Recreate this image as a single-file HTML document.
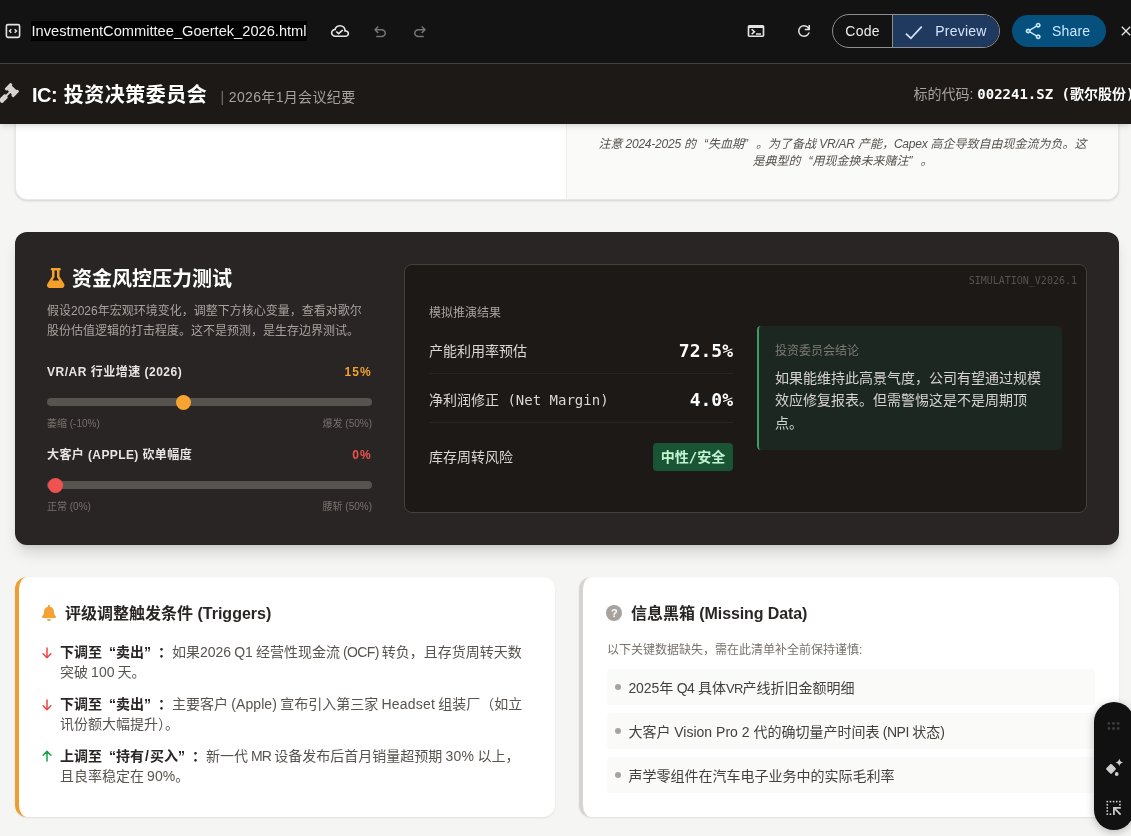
<!DOCTYPE html>
<html lang="zh-CN">
<head>
<meta charset="utf-8">
<title>InvestmentCommittee_Goertek_2026.html</title>
<style>
*{box-sizing:border-box;margin:0;padding:0}
html,body{width:1131px;height:836px;overflow:hidden}
body{background:#f5f5f4;font-family:"Liberation Sans","Noto Sans CJK SC",sans-serif;color:#292524;position:relative}
body>*{will-change:transform}
.mono{font-family:"DejaVu Sans Mono","Liberation Mono","Noto Sans CJK SC",monospace}
/* top app bar */
#topbar{position:absolute;left:0;top:0;width:1131px;height:64px;background:#131313;border-bottom:1px solid #424242;z-index:30}
#fname{position:absolute;left:31px;top:21px;height:19.500px;line-height:19.500px;font-size:14.650px;color:#f2f2f2;background:#000;padding:0 .5px;white-space:nowrap}
/* header */
#hdr{position:absolute;left:0;top:64px;width:1131px;height:60px;background:#1c1917;z-index:20;box-shadow:0 4px 6px -1px rgba(0,0,0,.1),0 2px 4px -1px rgba(0,0,0,.06)}
#hdr h1{position:absolute;left:32px;word-spacing:.5px;top:16px;font-size:20px;line-height:30px;font-weight:700;color:#fff;white-space:nowrap;letter-spacing:.5px}
#hdr .sub{position:absolute;left:220.500px;top:21px;font-size:14px;line-height:24px;color:#a8a29e;white-space:nowrap;letter-spacing:.35px}
#hdr .sub i{font-style:normal;color:#78716c}
#hdr .code{position:absolute;left:913.500px;top:18px;font-size:14px;line-height:24px;color:#a8a29e;white-space:nowrap}
#hdr .code b{color:#fff;font-weight:700;font-size:14px}
/* top card */
#card1{position:absolute;left:15px;top:100px;width:1104px;height:99.500px;background:#fff;border:1px solid #e9e7e5;border-radius:12px;box-shadow:0 1px 3px rgba(0,0,0,.1),0 1px 2px rgba(0,0,0,.06);overflow:hidden}
#card1 .r{position:absolute;left:550px;top:0;width:552px;height:99px;background:#fafaf9;border-left:1px solid #f0efed}
#card1 .note{position:absolute;left:9.500px;top:35.300px;width:532px;white-space:nowrap;text-align:center;font-size:12px;line-height:16.300px;color:#57534e;font-style:italic}
/* dark card */
#sim{position:absolute;left:15px;top:232px;width:1104px;height:313px;background:#292524;border-radius:12px;box-shadow:0 10px 15px -3px rgba(0,0,0,.15),0 4px 6px -2px rgba(0,0,0,.08);color:#fff}

#sim h2{position:absolute;left:57px;top:32px;font-size:20px;line-height:30px;font-weight:700;color:#fff;white-space:nowrap}
#sim .desc{position:absolute;left:32px;top:70.200px;width:320px;font-size:12px;line-height:19.5px;color:#a8a29e}
.lab{position:absolute;left:32px;font-size:12px;line-height:16px;font-weight:700;color:#e7e5e4;white-space:nowrap;letter-spacing:.5px}
.val{position:absolute;right:747px;font-size:12px;line-height:16px;font-weight:700;white-space:nowrap;text-align:right;letter-spacing:1.100px;margin-right:.200px}
.track{position:absolute;left:32px;width:325px;height:8px;border-radius:4px;background:#57534e}
.thumb{position:absolute;width:15px;height:15px;border-radius:50%}
.tick{position:absolute;font-size:10px;line-height:14px;color:#78716c;white-space:nowrap}
#panel{position:absolute;left:389px;top:32px;width:683px;height:249px;background:#1c1917;border:1px solid #44403c;border-radius:8px}
#panel .ver{position:absolute;right:9px;top:9px;font-size:10px;line-height:14px;color:#57534e;white-space:nowrap}
#panel .ttl{position:absolute;left:24px;top:40px;font-size:12px;line-height:16px;color:#a8a29e;white-space:nowrap}
.row{position:absolute;left:24px;width:304px;border-bottom:1px solid #292524}
.row .k{position:absolute;left:0;font-size:14px;line-height:20px;color:#d9d6d4;white-space:nowrap}
.row .v{position:absolute;right:0;font-size:18px;line-height:28px;font-weight:700;color:#fff;white-space:nowrap}
.badge{position:absolute;right:0;top:7px;width:80px;height:28px;border-radius:4px;background:#195535;color:#c3f5d2;font-size:14px;line-height:28px;font-weight:700;text-align:center;white-space:nowrap}
#concl{position:absolute;left:352px;top:61px;width:305px;height:124px;background:#1c2721;border-left:2px solid #3f9c5c;border-radius:4px}
#concl .t{position:absolute;left:16px;top:17px;font-size:12px;line-height:16px;color:#807974;white-space:nowrap}
#concl .b{position:absolute;left:16px;top:40.500px;width:272px;font-size:14px;line-height:22.75px;color:#d6d3d1}
/* bottom cards */
.bcard{position:absolute;top:577px;height:240px;background:#fff;border-radius:12px;box-shadow:0 1px 2px rgba(0,0,0,.09)}
.bcard h3{position:absolute;top:25px;font-size:16px;line-height:24px;font-weight:700;color:#292524;white-space:nowrap}
#trig{left:15px;width:540px;border-left:4px solid #ed9d34}
#miss{left:579px;width:540px;border-left:4px solid #d6d3d1}
.ti{position:absolute;left:41px;width:480px;font-size:14px;line-height:20px;color:#57534e;white-space:nowrap}
.ti .l{word-spacing:-.8px}
.ti b .l{padding:0 1px}
.ti b{color:#292524;font-weight:700}
#miss .sub{position:absolute;left:24px;top:64.800px;font-size:12px;line-height:16px;color:#78716c;white-space:nowrap}
.mi{position:absolute;left:24px;width:488px;height:36px;border-radius:4px;background:#fafaf9;font-size:14px;line-height:38px;color:#44403c;padding-left:21.400px;white-space:nowrap}
.mi:before{content:"";position:absolute;left:8px;top:15px;width:6px;height:6px;border-radius:50%;background:#a8a29e}
#float{position:absolute;left:1094.300px;top:702px;width:40px;height:127.500px;border-radius:20px;background:#111;z-index:40;box-shadow:0 2px 8px rgba(0,0,0,.25)}
.q{display:inline-block;width:1em}
.ql{text-align:right}
.qr{text-align:left}

svg{position:absolute;display:block;overflow:visible}
#pill{position:absolute;left:832px;top:14px;width:168px;height:34px;border:1px solid #8e8e8e;border-radius:17px;overflow:hidden}
#pill .c{position:absolute;left:0;top:0;width:59px;height:32px;line-height:32px;text-align:center;font-size:14px;color:#ececec;letter-spacing:.2px}
#pill .p{position:absolute;left:59px;top:0;width:107px;height:32px;background:#20395f;border-left:1px solid #8e8e8e}
#pill .p span{position:absolute;left:42.300px;top:0;line-height:32px;font-size:14px;color:#d3e3fd;letter-spacing:.2px}
#share{position:absolute;left:1012px;top:15px;width:94px;height:32px;border-radius:16px;background:#05507d}
#share span{position:absolute;left:40px;top:0;line-height:32px;font-size:14px;color:#c9e6ff;letter-spacing:.2px}
#card1 .l{letter-spacing:-.22px}
.qm{position:absolute;left:23.450px;top:27.950px;width:16px;height:16px;border-radius:50%;background:#a8a29e;color:#fff;font-size:11px;line-height:16px;font-weight:700;text-align:center}
#fname span{position:relative;top:.9px}
</style>
</head>
<body>
<div id="topbar">
  <svg style="left:5px;top:23px" width="16" height="16" viewBox="0 0 16 16" fill="none" stroke="#e3e3e3" stroke-width="1.6"><rect x="1.4" y="1.6" width="13.2" height="12.8" rx="1.6"/><path d="M6.3 6.3 4.6 8l1.7 1.7M9.7 6.3 11.4 8 9.700 9.700" stroke-width="1.5"/></svg>
  <svg style="left:330px;top:22px" width="20" height="18" preserveAspectRatio="none" viewBox="0 -960 960 960" fill="#e3e3e3"><path d="M414-280l226-226-58-58-169 169-84-84-57 57 142 142ZM260-160q-91 0-155.500-63T40-377q0-78 47-139t123-78q25-92 100-149t170-57q117 0 198.500 81.500T760-520q69 8 114.500 59.500T920-340q0 75-52.500 127.500T740-160H260Zm0-80h480q42 0 71-29t29-71q0-42-29-71t-71-29h-60v-80q0-83-58.500-141.500T480-720q-83 0-141.500 58.500T280-520h-20q-58 0-99 41t-41 99q0 58 41 99t99 41Z"/></svg>
  <svg style="left:371.200px;top:23px" width="18" height="18" viewBox="0 -960 960 960" fill="#757575"><path d="M280-200v-80h284q63 0 109.500-40T720-420q0-60-46.500-100T564-560H312l104 104-56 56-200-200 200-200 56 56-104 104h252q97 0 166.500 63T800-420q0 94-69.500 157T564-200H280Z"/></svg>
  <svg style="left:411px;top:23px" width="18" height="18" viewBox="0 -960 960 960" fill="#757575"><path d="M396-200q-97 0-166.500-63T160-420q0-94 69.500-157T396-640h252L544-744l56-56 200 200-200 200-56-56 104-104H396q-63 0-109.500 40T240-420q0 60 46.500 100T396-280h284v80H396Z"/></svg>
  <svg style="left:746px;top:21.700px" width="20" height="18" preserveAspectRatio="none" viewBox="0 -960 960 960" fill="#e3e3e3"><path d="M160-160q-33 0-56.500-23.500T80-240v-480q0-33 23.500-56.500T160-800h640q33 0 56.500 23.500T880-720v480q0 33-23.500 56.500T800-160H160Zm0-80h640v-400H160v400Zm140-40-56-56 103-104-104-104 57-56 160 160-160 160Zm180 0v-80h240v80H480Z"/></svg>
  <svg style="left:795.250px;top:22px" width="18" height="18" viewBox="0 -960 960 960" fill="#e3e3e3"><path d="M480-160q-134 0-227-93t-93-227q0-134 93-227t227-93q69 0 132 28.500T720-690v-110h80v280H520v-80h168q-32-56-87.500-88T480-720q-100 0-170 70t-70 170q0 100 70 170t170 70q77 0 139-44t87-116h84q-28 106-114 173t-196 67Z"/></svg>
  <div id="pill"><div class="c">Code</div><div class="p"><svg style="left:0;top:0" width="40" height="32" viewBox="0 0 40 32" fill="none" stroke="#d3e3fd" stroke-width="1.700"><path d="M12.900 18.600 17.900 23.400 28.700 11.700"/></svg><span>Preview</span></div></div>
  <div id="share"><svg style="left:12px;top:6px" width="20" height="20" viewBox="0 -960 960 960" fill="#c9e6ff"><path d="M680-80q-50 0-85-35t-35-85q0-6 3-28L282-392q-16 15-37 23.500t-45 8.500q-50 0-85-35t-35-85q0-50 35-85t85-35q24 0 45 8.500t37 23.500l281-164q-2-7-2.500-13.500T560-760q0-50 35-85t85-35q50 0 85 35t35 85q0 50-35 85t-85 35q-24 0-45-8.500T598-672L317-508q2 7 2.500 13.500t.5 14.500q0 8-.5 14.500T317-452l281 164q16-15 37-23.500t45-8.500q50 0 85 35t35 85q0 50-35 85t-85 35Zm0-80q17 0 28.500-11.500T720-200q0-17-11.500-28.500T680-240q-17 0-28.500 11.500T640-200q0 17 11.500 28.500T680-160ZM200-440q17 0 28.500-11.500T240-480q0-17-11.500-28.500T200-520q-17 0-28.500 11.500T160-480q0 17 11.500 28.500T200-440Zm480-280q17 0 28.500-11.500T720-760q0-17-11.500-28.500T680-800q-17 0-28.500 11.500T640-760q0 17 11.500 28.500T680-720Z"/></svg><span>Share</span></div>
  <svg style="left:1118px;top:23px" width="16" height="16" viewBox="0 0 24 24" fill="#e3e3e3"><path d="M19 6.410 17.590 5 12 10.590 6.410 5 5 6.410 10.590 12 5 17.590 6.410 19 12 13.410 17.590 19 19 17.590 13.410 12z"/></svg>
  <div id="fname"><span>InvestmentCommittee_Goertek_2026.html</span></div>
</div>
<div id="hdr">
  <svg style="left:-1px;top:19px" width="20" height="20" viewBox="0 0 512 512" fill="#d6d3d1"><path d="M504.971 199.362l-22.627-22.627c-9.373-9.373-24.569-9.373-33.941 0l-5.657 5.657L329.608 69.255l5.657-5.657c9.373-9.373 9.373-24.569 0-33.941L312.638 7.029c-9.373-9.373-24.569-9.373-33.941 0L154.246 131.480c-9.373 9.373-9.373 24.569 0 33.941l22.627 22.627c9.373 9.373 24.569 9.373 33.941 0l5.657-5.657 39.598 39.598-81.040 81.040-5.657-5.657c-12.497-12.497-32.758-12.497-45.255 0L9.373 412.118c-12.497 12.497-12.497 32.758 0 45.255l45.255 45.255c12.497 12.497 32.758 12.497 45.255 0l114.745-114.745c12.497-12.497 12.497-32.758 0-45.255l-5.657-5.657 81.040-81.040 39.598 39.598-5.657 5.657c-9.373 9.373-9.373 24.569 0 33.941l22.627 22.627c9.373 9.373 24.569 9.373 33.941 0l124.451-124.451c9.372-9.372 9.372-24.568 0-33.941z"/></svg>
  <h1><span style="letter-spacing:-.5px">IC:</span> 投资决策委员会</h1>
  <div class="sub"><i>|</i> 2026年1月会议纪要</div>
  <div class="code">标的代码: <b class="mono">002241.SZ (歌尔股份)</b></div>
</div>
<div id="card1">
  <div class="r"><div class="note">注意<span class="l"> 2024-2025 </span>的<span class="q ql">“</span>失血期<span class="q qr">”</span>。为了备战<span class="l"> VR/AR </span>产能，<span class="l">Capex </span>高企导致自由现金流为负。这<br>是典型的<span class="q ql">“</span>用现金换未来赌注<span class="q qr">”</span>。</div></div>
</div>
<div id="sim">
  <svg style="left:31.700px;top:35.600px" width="17.500" height="20" viewBox="0 0 448 512" fill="#f5a02c"><path d="M437.200 403.500L320 215V64h8c13.300 0 24-10.700 24-24V24c0-13.300-10.700-24-24-24H120c-13.300 0-24 10.700-24 24v16c0 13.300 10.700 24 24 24h8v151L10.800 403.500C-18.500 450.600 15.300 512 70.900 512h306.200c55.700 0 89.400-61.500 60.100-108.500zM137.900 320l48.200-77.600c3.700-5.200 5.800-11.600 5.800-18.400V64h64v160c0 6.900 2.200 13.200 5.800 18.400l48.200 77.600h-172z"/></svg>
  <h2>资金风控压力测试</h2>
  <div class="desc">假设2026年宏观环境变化，调整下方核心变量，查看对歌尔股份估值逻辑的打击程度。这不是预测，是生存边界测试。</div>
  <div class="lab" style="top:132px">VR/AR 行业增速 (2026)</div>
  <div class="val" style="top:132px;color:#f0a030">15%</div>
  <div class="track" style="top:165.800px"></div>
  <div class="thumb" style="left:160.500px;top:162.500px;background:#f7a530"></div>
  <div class="tick" style="left:32px;top:185px">萎缩 (-10%)</div>
  <div class="tick" style="right:747px;top:185px">爆发 (50%)</div>
  <div class="lab" style="top:215px;letter-spacing:.4px">大客户 (APPLE) 砍单幅度</div>
  <div class="val" style="top:215px;color:#f05252">0%</div>
  <div class="track" style="top:248.800px"></div>
  <div class="thumb" style="left:32.500px;top:245.500px;background:#f05252"></div>
  <div class="tick" style="left:32px;top:268px">正常 (0%)</div>
  <div class="tick" style="right:747px;top:268px">腰斩 (50%)</div>
  <div id="panel">
    <div class="ver mono">SIMULATION_V2026.1</div>
    <div class="ttl">模拟推演结果</div>
    <div class="row" style="top:61px;height:48px"><div class="k" style="top:15px">产能利用率预估</div><div class="v mono" style="top:11px">72.5%</div></div>
    <div class="row" style="top:109px;height:49px"><div class="k mono" style="top:16px">净利润修正 (Net Margin)</div><div class="v mono" style="top:12px">4.0%</div></div>
    <div class="row" style="top:171px;height:42px;border:0"><div class="k" style="top:11px">库存周转风险</div><div class="badge mono">中性/安全</div></div>
    <div id="concl"><div class="t">投资委员会结论</div><div class="b">如果能维持此高景气度，公司有望通过规模效应修复报表。但需警惕这是不是周期顶点。</div></div>
  </div>
</div>
<div class="bcard" id="trig">
  <svg style="left:23.400px;top:27.800px" width="14" height="16" viewBox="0 0 448 512" fill="#f5a133"><path d="M224 512c35.320 0 63.970-28.650 63.970-64H160.030c0 35.350 28.650 64 63.970 64zm215.390-149.710c-19.320-20.760-55.470-51.990-55.470-154.290 0-77.700-54.480-139.900-127.940-155.160V32c0-17.670-14.320-32-31.980-32s-31.980 14.330-31.980 32v20.840C118.560 68.100 64.080 130.300 64.080 208c0 102.300-36.150 133.530-55.470 154.290-6 6.450-8.660 14.160-8.610 21.710.110 16.400 12.980 32 32.100 32h383.800c19.120 0 32-15.600 32.100-32 .050-7.550-2.610-15.270-8.610-21.710z"/></svg>
  <svg style="left:22.050px;top:69.6px" width="12" height="12" viewBox="0 0 12 12" fill="none" stroke="#ef4444" stroke-width="1.500" stroke-linecap="round" stroke-linejoin="round"><path d="M6 1.100v9.600M2.100 6.800 6 10.700l3.900-3.900"/></svg>
  <svg style="left:22.050px;top:121.5px" width="12" height="12" viewBox="0 0 12 12" fill="none" stroke="#ef4444" stroke-width="1.500" stroke-linecap="round" stroke-linejoin="round"><path d="M6 1.100v9.600M2.100 6.800 6 10.700l3.900-3.900"/></svg>
  <svg style="left:22.050px;top:173.3px" width="12" height="12" viewBox="0 0 12 12" fill="none" stroke="#16a34a" stroke-width="1.500" stroke-linecap="round" stroke-linejoin="round"><path d="M6 10.900V1.300M2.100 5.200 6 1.300l3.900 3.900"/></svg>
  <h3 style="left:46px">评级调整触发条件<span class="l"> (Triggers)</span></h3>
  <div class="ti" style="top:65px"><b>下调至<span class="q ql">“</span>卖出<span class="q qr">”</span>：</b>如果<span class="l">2026 Q1 </span>经营性现金流<span class="l"> <span style="letter-spacing:-.65px">(OCF)</span> </span>转负，且存货周转天数<br>突破<span class="l"> 100 </span>天。</div>
  <div class="ti" style="top:117px"><b>下调至<span class="q ql">“</span>卖出<span class="q qr">”</span>：</b>主要客户<span class="l" style="letter-spacing:.1px"> (Apple) </span>宣布引入第三家<span class="l" style="letter-spacing:.2px"> Headset </span>组装厂（如立<br>讯份额大幅提升）。</div>
  <div class="ti" style="top:169px"><b>上调至<span class="q ql">“</span>持有<span class="l">/</span>买入<span class="q qr">”</span>：</b>新一代<span class="l"> <span style="letter-spacing:-.8px">MR</span> </span>设备发布后首月销量超预期<span class="l" style="letter-spacing:.2px"> 30% </span>以上，<br>且良率稳定在<span class="l"> 90%</span>。</div>
</div>
<div class="bcard" id="miss">
  <div class="qm">?</div>
  <h3 style="left:48px">信息黑箱<span style="letter-spacing:-.1px"> (Missing Data)</span></h3>
  <div class="sub">以下关键数据缺失，需在此清单补全前保持谨慎:</div>
  <div class="mi" style="top:92px"><span style="letter-spacing:-.1px">2025</span>年<span style="letter-spacing:-.4px"> Q4 </span>具体<span style="font-size:13px;letter-spacing:-.75px">VR</span>产线折旧金额明细</div>
  <div class="mi" style="top:136px">大客户 Vision Pro 2 代的确切量产时间表<span style="letter-spacing:-.5px"> (NPI </span>状态)</div>
  <div class="mi" style="top:180px">声学零组件在汽车电子业务中的实际毛利率</div>
</div>
<div id="float"><svg style="left:0;top:0" width="40" height="128" viewBox="0 0 40 128"><g fill="#3d3d3d"><circle cx="14.9" cy="21.4" r="1.400"/><circle cx="19.5" cy="21.4" r="1.400"/><circle cx="24.2" cy="21.4" r="1.400"/><circle cx="14.9" cy="26.5" r="1.400"/><circle cx="19.5" cy="26.5" r="1.400"/><circle cx="24.2" cy="26.5" r="1.400"/></g><g fill="#cfcfcf"><path d="M17 62q.450 0 .800.350l3.700 3.700q.850.850 0 1.700l-3.700 3.700q-.800.800-1.600 0l-3.700-3.700q-.850-.850 0-1.700l3.700-3.700q.350-.350.800-.350z"/><path d="M25.300 56.500c.500 2.400 1.500 3.400 3.900 3.900-2.400.500-3.400 1.500-3.900 3.900-.500-2.400-1.500-3.400-3.900-3.900 2.400-.500 3.400-1.500 3.900-3.900z"/><circle cx="22.700" cy="72" r="1.900"/><rect x="12.50" y="98.80" width="1.600" height="1.600"/><rect x="15.65" y="98.80" width="1.600" height="1.600"/><rect x="18.80" y="98.80" width="1.600" height="1.600"/><rect x="21.95" y="98.80" width="1.600" height="1.600"/><rect x="25.10" y="98.80" width="1.600" height="1.600"/><rect x="12.50" y="101.95" width="1.600" height="1.600"/><rect x="12.50" y="105.10" width="1.600" height="1.600"/><rect x="12.50" y="108.25" width="1.600" height="1.600"/><rect x="12.50" y="111.40" width="1.600" height="1.600"/><rect x="25.10" y="101.95" width="1.600" height="1.600"/><rect x="15.65" y="111.40" width="1.600" height="1.600"/></g><g fill="none" stroke="#cfcfcf" stroke-width="1.700"><path d="M26.800 105.800H19.900V112.900"/><path d="M20.300 106.200 26.600 112.600"/></g></svg></div>
</body>
</html>
